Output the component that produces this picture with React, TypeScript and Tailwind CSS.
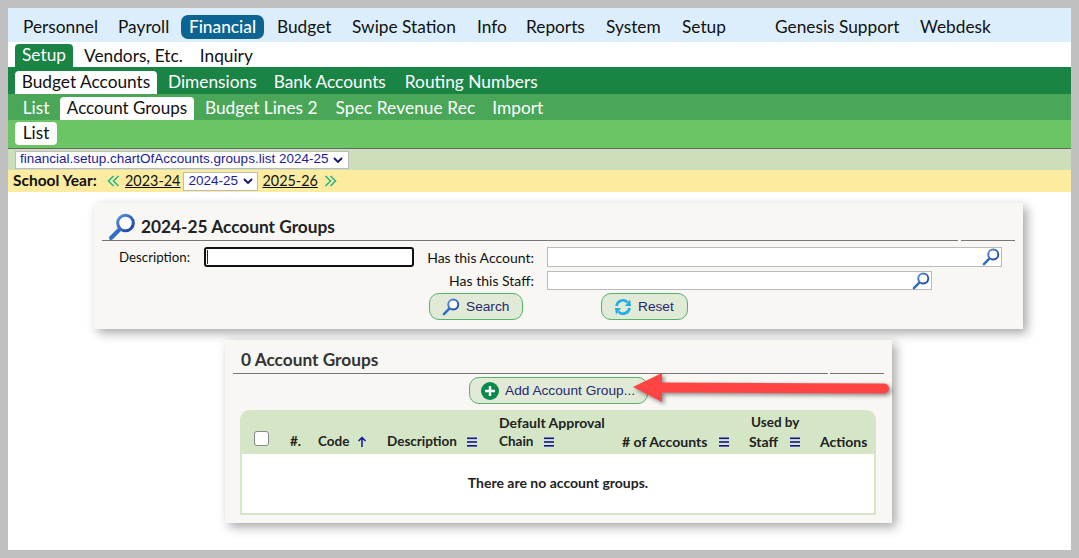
import React from "react";

const Mag = ({ className }: { className: string }) => (
  <svg viewBox="0 0 28 28" className={className}>
    <defs>
      <linearGradient id="magRing" x1="0" y1="0" x2="1" y2="1">
        <stop offset="0" stopColor="#5b8fe0" />
        <stop offset="1" stopColor="#173f9e" />
      </linearGradient>
    </defs>
    <line x1="3" y1="25" x2="11" y2="17" stroke="#2f6ec8" strokeWidth="4" strokeLinecap="round" />
    <circle cx="17.5" cy="10" r="7.8" fill="#ffffff" fillOpacity="0.85" stroke="url(#magRing)" strokeWidth="3" />
  </svg>
);

const Sort = () => (
  <svg viewBox="0 0 10 10" className="w-[10px] h-[10px] shrink-0">
    <rect x="0" y="0.5" width="10" height="1.6" fill="#13139a" />
    <rect x="0" y="4.2" width="10" height="1.6" fill="#13139a" />
    <rect x="0" y="8" width="10" height="1.6" fill="#13139a" />
  </svg>
);

const Chevrons = ({ right }: { right?: boolean }) => (
  <svg viewBox="0 0 13 12" className="w-[13px] h-[12px]">
    <path
      d={right ? "M1.5 1 L6.5 6 L1.5 11 M6.5 1 L11.5 6 L6.5 11" : "M6.5 1 L1.5 6 L6.5 11 M11.5 1 L6.5 6 L11.5 11"}
      fill="none"
      stroke="#27b58b"
      strokeWidth="1.6"
    />
  </svg>
);

const font = "font-['Lato','Noto_Sans',sans-serif]";
const arial = "font-['Liberation_Sans',Arial,sans-serif]";

const topNav: [string, string][] = [
  ["Personnel", "w-[95px]"],
  ["Payroll", "w-[72px]"],
  ["Financial", "w-[87px]"],
  ["Budget", "w-[75px]"],
  ["Swipe Station", "w-[125px]"],
  ["Info", "w-[49px]"],
  ["Reports", "w-[80px]"],
  ["System", "w-[76px]"],
  ["Setup", "w-[93px]"],
  ["Genesis Support", "w-[145px]"],
  ["Webdesk", "w-[80px]"],
];

function Btn({ icon, label, className }: { icon: React.ReactNode; label: string; className: string }) {
  return (
    <div className={`h-[27px] border border-[#55b468] bg-[#e0ead7] rounded-[10px] flex items-center text-[13.7px] text-[#28286e] ${arial} ${className}`}>
      {icon}
      <span className="pt-[1px]">{label}</span>
    </div>
  );
}

export default function App() {
  return (
    <div className={`w-[1079px] h-[558px] border-8 border-[#c0c0c0] bg-white relative overflow-hidden text-[#111] ${font}`}>
      <div className="h-[34px] bg-[#dceefb] flex items-center pt-[4px] pl-[15px] text-[17.3px]">
        {topNav.map(([t, w]) => (
          <div key={t} className={`${w} shrink-0`}>
            {t === "Financial" ? (
              <span className="inline-flex -ml-[9px] w-[83px] h-[24px] items-center justify-center rounded-[7px] bg-[#0b6491] text-white font-medium">{t}</span>
            ) : (
              t
            )}
          </div>
        ))}
      </div>
      <div className="h-[25px] flex items-end pl-[7px] text-[17.3px]">
        <div className="w-[58px] h-[23px] pb-[2px] bg-[#1a8445] text-white rounded-t-[4px] flex items-center justify-center">Setup</div>
        <div className="ml-[11px] h-[23px] leading-[23px]">Vendors, Etc.</div>
        <div className="ml-[17px] h-[23px] leading-[23px]">Inquiry</div>
      </div>
      <div className="h-[27px] bg-[#1a8445] flex items-end pl-[7px] text-[17.3px] text-white">
        <div className="w-[142px] h-[23px] pb-[2px] bg-white text-[#111] rounded-t-[4px] flex items-center justify-center">Budget Accounts</div>
        <div className="ml-[11px] h-[23px] leading-[21px]">Dimensions</div>
        <div className="ml-[17px] h-[23px] leading-[21px]">Bank Accounts</div>
        <div className="ml-[19px] h-[23px] leading-[21px]">Routing Numbers</div>
      </div>
      <div className="h-[26px] bg-[#49a757] flex items-end pl-[7px] text-[17.3px] text-white">
        <div className="w-[42px] h-[23px] leading-[21px] text-center">List</div>
        <div className="ml-[3px] w-[134px] h-[23px] pb-[2px] bg-white text-[#111] text-[17px] rounded-t-[4px] flex items-center justify-center">Account Groups</div>
        <div className="ml-[11px] h-[23px] leading-[21px]">Budget Lines 2</div>
        <div className="ml-[18px] h-[23px] leading-[21px] tracking-[0.1px]">Spec Revenue Rec</div>
        <div className="ml-[17px] h-[23px] leading-[21px]">Import</div>
      </div>
      <div className="h-[29px] bg-[#6cc565] border-b border-[#666] flex items-start pt-[2px] pl-[7px] text-[17.3px]">
        <div className="w-[42px] h-[23px] pb-[2px] bg-white rounded-[4px] flex items-center justify-center">List</div>
      </div>
      <div className="h-[21px] bg-[#cddfba] flex items-center pl-[7px]">
        <div className={`w-[334px] h-[18px] bg-white border border-[#bbb] flex items-center pl-[4px] text-[13.5px] text-[#1a1a9c] whitespace-nowrap ${arial}`}>
          financial.setup.chartOfAccounts.groups.list 2024-25
          <svg viewBox="0 0 10 6" className="w-[10px] h-[6px] ml-[5px]"><path d="M1 1 L5 5 L9 1" fill="none" stroke="#10106e" strokeWidth="1.8" /></svg>
        </div>
      </div>
      <div className="h-[22px] bg-[#fdeca0] flex items-center pl-[5px] text-[14.4px]">
        <span className="font-bold w-[94px] text-[15.5px] whitespace-nowrap">School Year:</span>
        <Chevrons />
        <span className="underline ml-[5px]">2023-24</span>
        <div className={`ml-[3px] w-[75px] h-[19px] bg-white border border-[#bbb] flex items-center pl-[4px] text-[13.5px] text-[#1a1a9c] ${arial}`}>
          2024-25
          <svg viewBox="0 0 10 6" className="w-[10px] h-[6px] ml-[5px]"><path d="M1 1 L5 5 L9 1" fill="none" stroke="#10106e" strokeWidth="1.8" /></svg>
        </div>
        <span className="underline ml-[4px]">2025-26</span>
        <span className="ml-[6px]"><Chevrons right /></span>
      </div>

      <div className="pl-[38px] flex flex-col items-center">
        <div className="mt-[11px] w-[929px] h-[126px] bg-[#f8f7f3] shadow-[4px_4px_10px_rgba(0,0,0,0.35)] px-[8px] text-[14px]">
          <div className="h-[37px] flex items-end">
            <Mag className="w-[28px] h-[28px] ml-[6px] mb-[-1px]" />
            <span className="ml-[5px] text-[17.3px] font-bold text-[#222]">2024-25 Account Groups</span>
          </div>
          <div className="flex gap-[3px]">
            <div className="w-[856px] h-px bg-[#777]" />
            <div className="w-[54px] h-px bg-[#777]" />
          </div>
          <div className="mt-[6px] h-[20px] flex items-center">
            <span className="ml-[17px] w-[85px] text-[13.3px] pt-[1px]">Description:</span>
            <div className="w-[210px] h-[20px] bg-white border-2 border-[#111] rounded-[3px] flex items-center"><div className="w-px h-[14px] ml-px bg-[#1a1a9c]" /></div>
            <span className="w-[120px] text-right">Has this Account:</span>
            <div className="ml-[13px] w-[455px] h-[20px] bg-white border border-[#bbb] flex items-center justify-end pr-[1px]"><Mag className="w-[18px] h-[18px]" /></div>
          </div>
          <div className="mt-[4px] h-[19px] flex items-center">
            <span className="w-[432px] text-right">Has this Staff:</span>
            <div className="ml-[13px] w-[385px] h-[19px] bg-white border border-[#bbb] flex items-center justify-end pr-[1px]"><Mag className="w-[18px] h-[18px]" /></div>
          </div>
          <div className="mt-[3px] flex">
            <Btn className="ml-[327px] w-[94px] pl-[12px]" label="Search" icon={<Mag className="w-[18px] h-[18px] mr-[6px]" />} />
            <Btn
              className="ml-[78px] w-[87px] pl-[12px]"
              label="Reset"
              icon={
                <svg viewBox="0 0 18 18" className="w-[18px] h-[18px] mr-[6px]">
                  <path d="M2.5 8 A6.5 6.5 0 0 1 13.5 4.2" fill="none" stroke="#1faee6" strokeWidth="2.6" />
                  <path d="M11 8 L17 8 L16 1.5 Z" fill="#1faee6" />
                  <path d="M15.5 10 A6.5 6.5 0 0 1 4.5 13.8" fill="none" stroke="#1faee6" strokeWidth="2.6" />
                  <path d="M7 10 L1 10 L2 16.5 Z" fill="#1faee6" />
                </svg>
              }
            />
          </div>
        </div>

        <div className="mt-[11px] w-[667px] h-[183px] bg-[#f8f7f3] shadow-[4px_4px_10px_rgba(0,0,0,0.35)] px-[8px]">
          <div className="h-[33px] flex items-end pl-[8px] text-[17.3px] font-bold text-[#333]">0 Account Groups</div>
          <div className="flex gap-[2px]">
            <div className="w-[595px] h-px bg-[#777]" />
            <div className="w-[54px] h-px bg-[#777]" />
          </div>
          <div className="mt-[3px] flex">
            <Btn
              className="ml-[236px] w-[179px] pl-[11px]"
              label="Add Account Group..."
              icon={
                <svg viewBox="0 0 18 18" className="w-[18px] h-[18px] mr-[6px]">
                  <circle cx="9" cy="9" r="9" fill="#0a8a4a" />
                  <path d="M9 4 V14 M4 9 H14" stroke="#fff" strokeWidth="2.4" />
                </svg>
              }
            />
          </div>
          <div className="mt-[6px] ml-[7px] w-[636px] h-[105px] flex flex-col bg-white border-2 border-t-0 border-[#d4e6c6] rounded-t-[10px]">
            <div className="-mx-[2px] h-[44px] bg-[#d4e6c6] rounded-t-[10px] flex items-end pb-[3px] text-[13.5px] font-bold text-[#222] leading-[19px]">
              <div className="w-[14px] shrink-0" />
              <div className="w-[15px] h-[15px] mb-[5px] shrink-0 bg-white border border-[#888] rounded-[3px]" />
              <div className="ml-[21px] w-[28px] shrink-0">#.</div>
              <div className="w-[69px] shrink-0 flex items-center">
                Code
                <svg viewBox="0 0 10 12" className="w-[10px] h-[12px] ml-[8px]"><path d="M5 11 V2 M1.5 5 L5 1.5 L8.5 5" fill="none" stroke="#13139a" strokeWidth="1.5" /></svg>
              </div>
              <div className="w-[112px] shrink-0 flex items-center gap-[10px]">Description <Sort /></div>
              <div className="w-[123px] shrink-0">
                <div className="whitespace-nowrap text-[14px]">Default Approval</div>
                <div className="flex items-center gap-[11px]">Chain <Sort /></div>
              </div>
              <div className="w-[127px] shrink-0 flex items-center gap-[11px] whitespace-nowrap text-[14.1px]">
                # of Accounts <Sort />
              </div>
              <div className="w-[71px] shrink-0">
                <div className="whitespace-nowrap pl-[2px]">Used by</div>
                <div className="flex items-center gap-[12px] text-[14px]">Staff <Sort /></div>
              </div>
              <div className="text-[14px]">Actions</div>
            </div>
            <div className="flex-1 flex items-center justify-center pb-[2px] text-[14px] font-bold text-[#222]">There are no account groups.</div>
          </div>
        </div>
      </div>

      <svg viewBox="0 0 270 40" className="absolute left-[617px] top-[355px] w-[270px] h-[40px] drop-shadow-[2px_2px_2px_rgba(0,0,0,0.45)]">
        <path d="M8 24 L37 10 L37 19.5 L259 20.5 A5 5 0 0 1 259 30.5 L37 29.5 L37 39 Z" fill="#ff4444" />
      </svg>
    </div>
  );
}
